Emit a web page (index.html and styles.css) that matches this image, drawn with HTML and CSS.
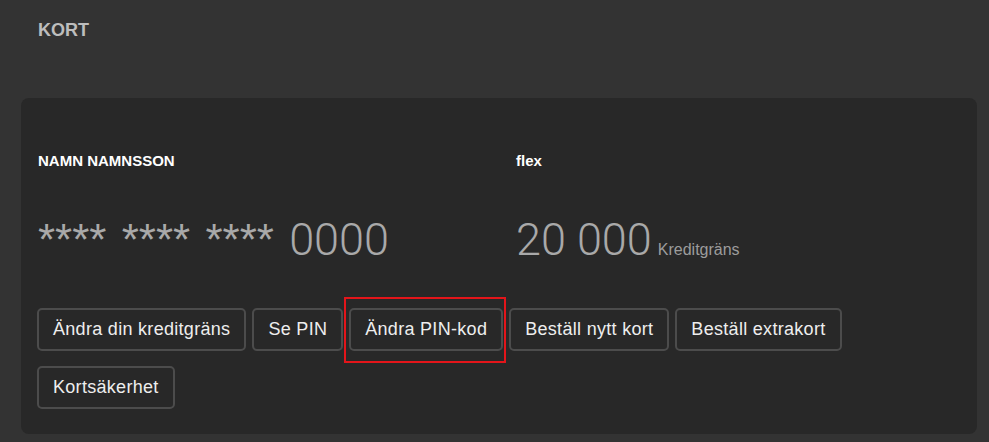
FILE: index.html
```html
<!DOCTYPE html>
<html lang="sv">
<head>
    <meta charset="UTF-8">
    <meta name="viewport" content="width=device-width, initial-scale=1.0">
    <title>Kort</title>
    <link rel="stylesheet" href="styles.css">
</head>
<body>
    <main class="page">
        <h2 class="page-title">KORT</h2>

        <section class="card-panel">
            <div class="card-info">
                <div class="card-col">
                    <div class="card-label">NAMN NAMNSSON</div>
                    <div class="card-big"><span class="card-stars">**** **** **** </span>0000</div>
                </div>
                <div class="card-col">
                    <div class="card-label">flex</div>
                    <div class="card-big">20 000<span class="card-unit">Kreditgräns</span></div>
                </div>
            </div>

            <div class="card-actions">
                <button class="btn">Ändra din kreditgräns</button>
                <button class="btn">Se PIN</button>
                <button class="btn btn-marked">Ändra PIN-kod</button>
                <button class="btn">Beställ nytt kort</button>
                <button class="btn">Beställ extrakort</button>
                <button class="btn">Kortsäkerhet</button>
            </div>
        </section>
    </main>
</body>
</html>
```

FILE: styles.css
```css
body {
    font-family: "Liberation Sans", Arial, sans-serif;
    margin: 0;
    padding: 0;
    background-color: #333333;
    color: #ffffff;
}

.page {
    padding: 20px 12px 0 21px;
}

.page-title {
    margin: 0 0 57px 17px;
    font-size: 18px;
    line-height: 21px;
    font-weight: bold;
    color: #bdbdbd;
}

.card-panel {
    background-color: #282828;
    border-radius: 8px;
    padding: 54px 0 25px 0;
}

.card-info {
    display: flex;
}

.card-col {
    width: 50%;
    padding-left: 17px;
    box-sizing: border-box;
}

.card-label {
    font-size: 15px;
    line-height: 18px;
    font-weight: bold;
    color: #ffffff;
}

.card-big {
    margin-top: 48px;
    font-family: Roboto, "Liberation Sans", sans-serif;
    font-weight: 300;
    font-size: 45px;
    line-height: 44px;
    color: #a9a9a9;
    white-space: pre;
}

.card-stars {
    font-family: "Liberation Sans", Arial, sans-serif;
    font-weight: normal;
    font-size: 44px;
    word-spacing: 3px;
}

.card-unit {
    margin-left: 6px;
    font-family: "Liberation Sans", Arial, sans-serif;
    font-weight: normal;
    font-size: 16px;
    color: #9c9c9c;
}

.card-actions {
    display: flex;
    flex-wrap: wrap;
    gap: 15px 6px;
    margin-top: 36px;
    padding: 0 16px;
}

.btn {
    position: relative;
    background-color: #282828;
    color: #eeeeee;
    border: 2px solid #4c4c4c;
    border-radius: 5px;
    padding: 9px 14px;
    font-family: "Liberation Sans", Arial, sans-serif;
    font-size: 18px;
    line-height: 21px;
    letter-spacing: 0.3px;
    cursor: pointer;
}

.btn:hover {
    border-color: #666666;
}

/* red marker round the highlighted button */
.btn-marked::after {
    content: "";
    position: absolute;
    top: -13px;
    left: -7px;
    right: -5px;
    bottom: -14px;
    border: 2px solid #e3151a;
}
```
